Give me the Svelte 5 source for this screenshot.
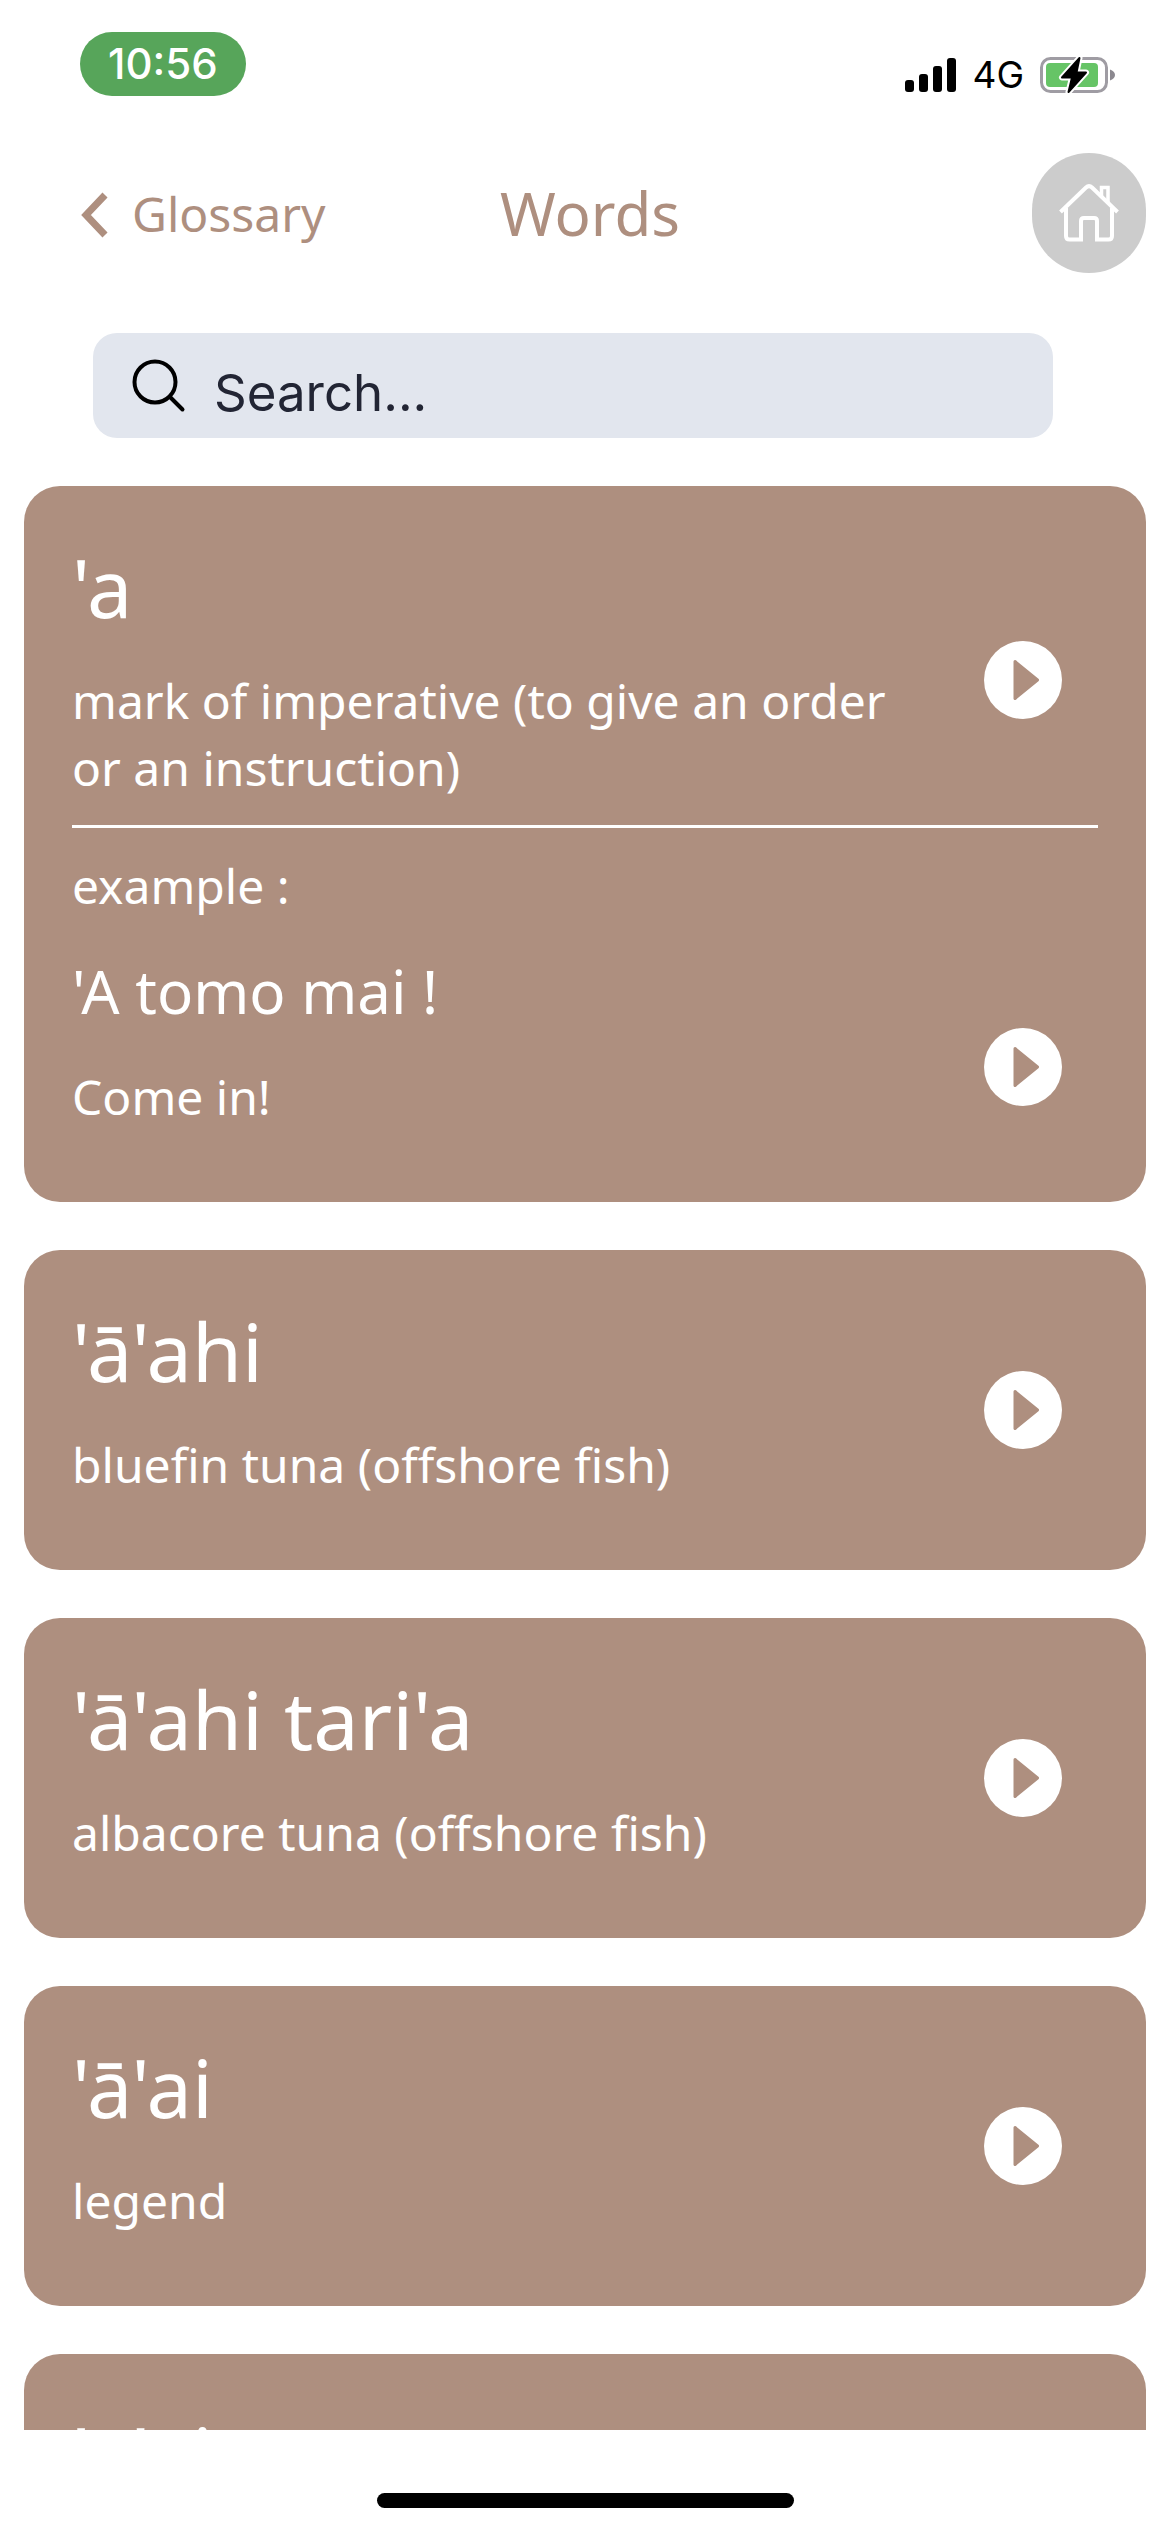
<script>
  const entries = [
    {
      word: "'a",
      meaning: 'mark of imperative (to give an order or an instruction)',
      example: { phrase: "'A tomo mai !", meaning: 'Come in!' }
    },
    { word: "'ā'ahi", meaning: 'bluefin tuna (offshore fish)' },
    { word: "'ā'ahi tari'a", meaning: 'albacore tuna (offshore fish)' },
    { word: "'ā'ai", meaning: 'legend' },
    { word: "'ā'ai" }
  ];

  let query = $state('');
</script>

{#snippet playButton(text)}
  <button class="play" type="button" aria-label={`Play ${text}`}>
    <svg viewBox="0 0 78 78" aria-hidden="true">
      <circle cx="39" cy="39" r="39" fill="#fff" />
      <path d="M31 20.500L53.500 39L31 57.500Z" fill="#ae8f7f" stroke="#ae8f7f" stroke-width="3" stroke-linejoin="round" />
    </svg>
  </button>
{/snippet}

<div class="screen">
  <div class="status">
    <span class="time">10:56</span>
    <div class="indicators">
      <svg class="signal" viewBox="0 0 51 34" aria-hidden="true">
        <rect x="0" y="22" width="9" height="12" rx="3" />
        <rect x="14" y="16" width="9" height="18" rx="3" />
        <rect x="28" y="8" width="9" height="26" rx="3" />
        <rect x="42" y="0" width="9" height="34" rx="3" />
      </svg>
      <span class="network">4G</span>
      <svg class="battery" viewBox="0 0 76 38" aria-hidden="true">
        <rect x="1.500" y="2.500" width="65" height="33" rx="9" fill="none" stroke="#9f9ca3" stroke-width="3" />
        <path d="M70 13.500c3 1 5 3 5 5.500s-2 4.500-5 5.500z" fill="#8b888f" />
        <rect x="6" y="7" width="52" height="24" rx="4" fill="#66c466" />
        <path d="M39.500 2L22 21.500H32L28.500 36L46 16.500H36.500Z" fill="#000" stroke="#fff" stroke-width="6" stroke-linejoin="round" />
        <path d="M39.500 2L22 21.500H32L28.500 36L46 16.500H36.500Z" fill="#000" stroke="#000" stroke-width="2" stroke-linejoin="round" />
      </svg>
    </div>
  </div>

  <header>
    <a class="back" href="#glossary">
      <svg viewBox="0 0 28 50" aria-hidden="true">
        <path d="M25 7L6 27L25 47" fill="none" stroke="#ae8f7f" stroke-width="7" />
      </svg>
      Glossary
    </a>
    <h1>Words</h1>
    <a class="home" href="#home" aria-label="Home">
      <svg viewBox="0 0 60 58" fill="none" stroke="#fff" stroke-width="4" aria-hidden="true">
        <path d="M1.500 28L27 3.500Q30 0.500 33 3.500L58.500 28" />
        <path d="M7 24V52Q7 55.500 10.500 55.500H22V37Q22 34 25 34H35Q38 34 38 37V55.500H49.500Q53 55.500 53 52V24" />
        <path d="M42.500 12V3.500H49V18" stroke-width="3.500" />
      </svg>
    </a>
  </header>

  <label class="search">
    <svg viewBox="0 0 54 54" fill="none" stroke="#000" stroke-width="4" stroke-linecap="round" aria-hidden="true">
      <circle cx="23" cy="23" r="20.500" />
      <path d="M38 38L50.500 50.500" />
    </svg>
    <input type="text" placeholder="Search..." aria-label="Search words" bind:value={query} />
  </label>

  <main>
    {#each entries as entry}
      <article>
        <div class="row">
          <div class="text">
            <h2>{entry.word}</h2>
            {#if entry.meaning}
              <p>{entry.meaning}</p>
            {/if}
          </div>
          {@render playButton(entry.word)}
        </div>
        {#if entry.example}
          <hr />
          <div class="row example">
            <div class="text">
              <p>example :</p>
              <h3>{entry.example.phrase}</h3>
              <p>{entry.example.meaning}</p>
            </div>
            {@render playButton(entry.example.phrase)}
          </div>
        {/if}
      </article>
    {/each}
  </main>

  <footer><div class="handle"></div></footer>
</div>

<style>
  :global(body) {
    background: #fff;
  }

  .screen {
    display: flex;
    flex-direction: column;
    height: 100vh;
    box-sizing: border-box;
    font-family: 'Noto Sans', sans-serif;
    font-size: 48px;
    line-height: 67px;
  }

  h1, h2, h3, p {
    margin: 0;
    font-weight: 400;
  }

  svg {
    display: block;
    flex: none;
  }

  .status {
    display: flex;
    justify-content: space-between;
    align-items: flex-start;
    padding: 32px 54px 0 80px;
    font-family: Inter, sans-serif;
  }

  .time {
    padding: 0 28px;
    border-radius: 32px;
    background: #57a55a;
    color: #fff;
    font-size: 42px;
    font-weight: 500;
    line-height: 64px;
  }

  .indicators {
    display: flex;
    align-items: center;
    gap: 16px;
    padding-top: 24px;
  }

  .signal {
    width: 51px;
    height: 34px;
  }

  .network {
    font-size: 37px;
    line-height: 38px;
  }

  .battery {
    width: 76px;
    height: 38px;
  }

  header {
    display: grid;
    grid-template-columns: 1fr auto 1fr;
    align-items: center;
    margin-top: 57px;
    padding: 0 24px 0 34px;
    color: #ae8f7f;
  }

  .back {
    display: flex;
    align-items: center;
    gap: 24px;
    padding-left: 46px;
    color: inherit;
    text-decoration: none;
  }

  .back svg {
    width: 28px;
    height: 50px;
  }

  h1 {
    font-size: 60px;
    line-height: 84px;
  }

  .home {
    display: flex;
    justify-self: end;
    align-items: center;
    justify-content: center;
    width: 114px;
    height: 120px;
    border-radius: 60px;
    background: #ccc;
  }

  .home svg {
    width: 60px;
    height: 58px;
  }

  .search {
    display: flex;
    align-items: center;
    gap: 28px;
    margin: 60px 117px 48px 93px;
    padding-left: 39px;
    border-radius: 24px;
    background: #e2e6ee;
  }

  .search svg {
    width: 54px;
    height: 54px;
  }

  input {
    flex: 1;
    min-width: 0;
    height: 105px;
    box-sizing: border-box;
    padding: 14px 24px 0 0;
    border: 0;
    outline: 0;
    background: none;
    color: #222534;
    font-family: Inter, sans-serif;
    font-size: 51px;
  }

  input::placeholder {
    color: #222534;
    opacity: 1;
  }

  main {
    display: flex;
    flex: 1;
    flex-direction: column;
    gap: 48px;
    min-height: 0;
    padding: 0 24px;
    overflow: hidden;
  }

  article {
    flex: none;
    padding: 48px;
    border-radius: 36px;
    background: #ae8f7f;
    color: #fff;
  }

  .row {
    display: flex;
    align-items: center;
    gap: 48px;
    min-height: 224px;
    padding-right: 36px;
  }

  .text {
    display: flex;
    flex: 1;
    flex-direction: column;
    align-self: flex-start;
    gap: 28px;
    padding-bottom: 24px;
  }

  h2 {
    font-size: 81px;
    line-height: 105px;
  }

  h3 {
    font-size: 60px;
    line-height: 88px;
  }

  hr {
    height: 3px;
    margin: 0 0 24px;
    border: 0;
    background: #fff;
  }

  .play {
    flex: none;
    width: 78px;
    height: 78px;
    padding: 0;
    border: 0;
    background: none;
  }

  .example {
    align-items: flex-end;
  }

  .example .play {
    margin-bottom: 48px;
  }

  footer {
    display: flex;
    justify-content: center;
    align-items: flex-end;
    flex: none;
    height: 102px;
    box-sizing: border-box;
    padding-bottom: 24px;
  }

  .handle {
    width: 417px;
    height: 15px;
    border-radius: 8px;
    background: #000;
  }
</style>
